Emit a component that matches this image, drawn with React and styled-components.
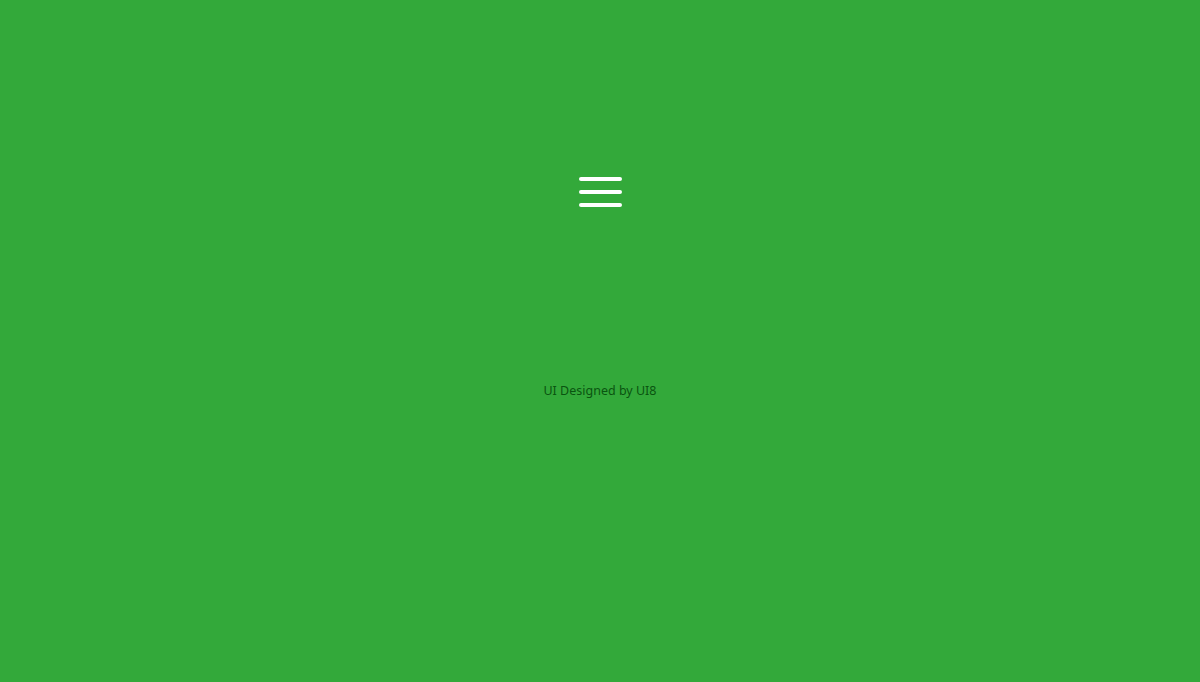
import { createGlobalStyle, styled } from "styled-components";

const bg = "#33a93a";
const credit = "#0a5410";

const GlobalStyle = createGlobalStyle`
  html, body {
    margin: 0;
    padding: 0;
    background: ${bg};
  }
`;

const Page = styled.main`
  min-height: 682px;
  display: flex;
  flex-direction: column;
  align-items: center;
  padding-top: 177px;
  box-sizing: border-box;
  font-family: "Noto Sans", "Open Sans", sans-serif;
`;

const MenuButton = styled.button`
  display: flex;
  flex-direction: column;
  gap: 9.5px;
  width: 43px;
  padding: 0;
  border: 0;
  background: transparent;
  cursor: pointer;
`;

const Bar = styled.span`
  display: block;
  height: 3.5px;
  border-radius: 2px;
  background: #ffffff;
`;

const Credit = styled.p`
  margin: 175px 0 0;
  font-size: 12.5px;
  line-height: 18px;
  color: ${credit};
`;

export default function App() {
  return (
    <>
      <GlobalStyle />
      <Page>
        <MenuButton aria-label="Menu">
          <Bar />
          <Bar />
          <Bar />
        </MenuButton>
        <Credit>UI Designed by UI8</Credit>
      </Page>
    </>
  );
}
